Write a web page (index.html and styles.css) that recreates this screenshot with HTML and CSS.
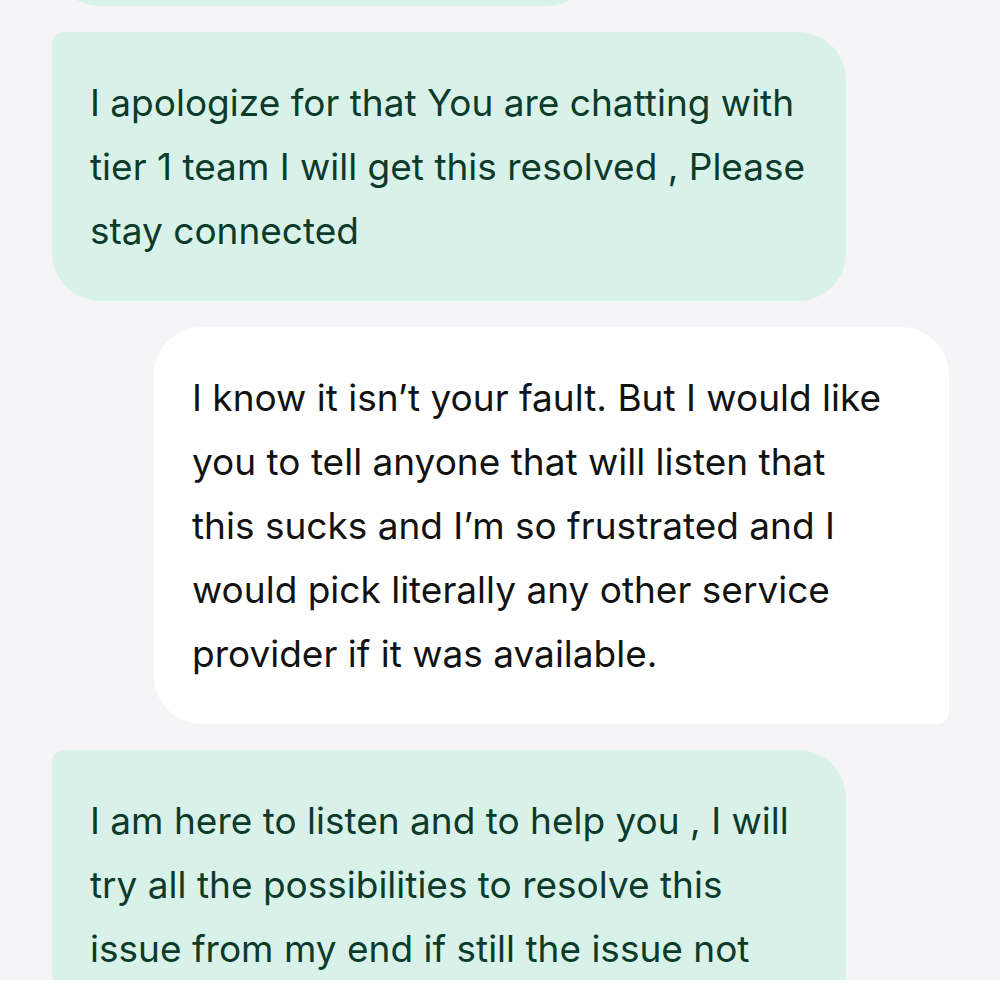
FILE: index.html
```html
<!DOCTYPE html>
<html lang="en">
<head>
<meta charset="utf-8">
<title>Chat</title>
<link rel="stylesheet" href="styles.css">
</head>
<body>
<main class="screen">
  <div class="thread">
    <div class="msg agent msg-prev" aria-hidden="true"></div>
    <div class="msg agent">
      <span class="line">I apologize for that You are chatting with</span>
      <span class="line">tier 1 team I will get this resolved , Please</span>
      <span class="line">stay connected</span>
    </div>
    <div class="msg user">
      <span class="line">I know it isn’t your fault. But I would like</span>
      <span class="line">you to tell anyone that will listen that</span>
      <span class="line">this sucks and I’m so frustrated and I</span>
      <span class="line">would pick literally any other service</span>
      <span class="line">provider if it was available.</span>
    </div>
    <div class="msg agent">
      <span class="line">I am here to listen and to help you , I will</span>
      <span class="line">try all the possibilities to resolve this</span>
      <span class="line">issue from my end if still the issue not</span>
    </div>
  </div>
</main>
</body>
</html>
```
FILE: styles.css
```css
html, body {
  margin: 0;
  padding: 0;
  background: #ffffff;
}

.screen {
  height: 980px;
  overflow: hidden;
  background: #f5f5f7;
  padding: 0 51px 0 52px;
  box-sizing: border-box;
}

.thread {
  display: flex;
  flex-direction: column;
  gap: 26px;
  margin-top: -135px;
}

.msg {
  box-sizing: border-box;
  width: 794px;
  padding: 39px 36px 38px 38px;
  font-family: Inter, "Noto Sans", sans-serif;
  font-size: 37px;
  line-height: 64px;
  letter-spacing: 0;
}

.line {
  display: block;
  white-space: nowrap;
}

.agent {
  align-self: flex-start;
  background: #d9f2e9;
  color: #0c3a2b;
  border-radius: 12px 48px 48px 48px;
}

.user {
  align-self: flex-end;
  width: 795px;
  background: #ffffff;
  color: #121212;
  border-radius: 48px 48px 12px 48px;
}

.msg-prev {
  width: 543px;
  height: 141px;
}
```
